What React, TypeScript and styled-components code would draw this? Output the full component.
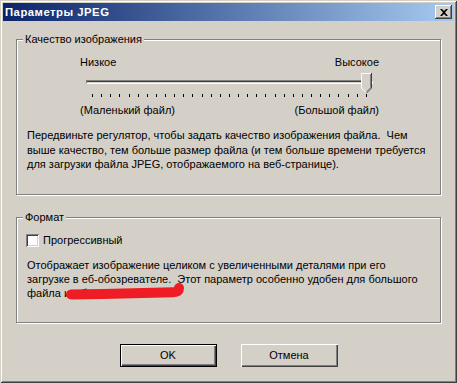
import React from 'react';
import styled, {createGlobalStyle} from 'styled-components';

const face = '#d4d0c8';
const shadow = '#808080';
const darkShadow = '#404040';
const uiFont = '"Liberation Sans", Arial, sans-serif';

const GlobalStyle = createGlobalStyle`
  html, body {
    margin: 0;
    padding: 0;
    background: ${face};
  }
  body {
    font-family: ${uiFont};
    font-size: 11px;
    color: #000;
  }
`;

const Window = styled.div`
  width: 457px;
  height: 383px;
  box-sizing: border-box;
  padding: 3px;
  background: ${face};
  box-shadow: inset 1px 1px 0 ${face}, inset -1px -1px 0 ${darkShadow},
    inset 2px 2px 0 #fff, inset -2px -2px 0 ${shadow};
  display: flex;
  flex-direction: column;
`;

const TitleBar = styled.div`
  height: 18px;
  display: flex;
  align-items: center;
  justify-content: space-between;
  padding: 0 2px 0 2px;
  background: linear-gradient(to right, #0a246a, #a6caf0);
`;

const Title = styled.div`
  color: #fff;
  font-weight: bold;
  font-size: 11.3px;
  letter-spacing: 0.5px;
`;

const CloseButton = styled.button`
  width: 17px;
  height: 14px;
  padding: 0;
  border: none;
  background: ${face};
  display: flex;
  align-items: center;
  justify-content: center;
  box-shadow: inset -1px -1px 0 ${darkShadow}, inset 1px 1px 0 #fff,
    inset -2px -2px 0 ${shadow};
`;

const Body = styled.div`
  padding: 12px 13px 0 13px;
  display: flex;
  flex-direction: column;
`;

const Group = styled.fieldset<{$top: number; $bottom: number}>`
  margin: ${(p) => p.$top}px 0 0 0;
  padding: 0 6px ${(p) => p.$bottom}px 6px;
  min-width: 0;
  width: 425px;
  box-sizing: border-box;
  border: 1px solid ${shadow};
  box-shadow: 1px 1px 0 #fff, inset 1px 1px 0 #fff;
`;

const Legend = styled.legend`
  padding: 0 2px;
  line-height: 13px;
  background: ${face};
`;

const SliderBox = styled.div`
  margin: 10px 0 0 57px;
  width: 299px;
`;

const LabelRow = styled.div`
  display: flex;
  justify-content: space-between;
  line-height: 13px;
  white-space: nowrap;
`;

const TrackArea = styled.div`
  position: relative;
  height: 24px;
`;

const Track = styled.div`
  position: absolute;
  left: 6px;
  right: 6px;
  top: 11px;
  height: 4px;
  box-sizing: border-box;
  border-top: 1px solid ${shadow};
  border-left: 1px solid ${shadow};
  border-bottom: 1px solid #fff;
  border-right: 1px solid #fff;
  box-shadow: inset 0 1px 0 ${darkShadow};
`;

const Thumb = styled.svg`
  position: absolute;
  left: 281px;
  top: 4px;
`;

const Ticks = styled.div`
  display: flex;
  justify-content: space-between;
  margin: 1px 12px 0 12px;
  height: 3px;
`;

const Tick = styled.span`
  width: 1px;
  height: 3px;
  background: #000;
`;

const BottomLabels = styled(LabelRow)`
  margin-top: 7px;
`;

const Text = styled.p<{$top: number; $line: number}>`
  position: relative;
  margin: ${(p) => p.$top}px 0 0 4px;
  line-height: ${(p) => p.$line}px;
  white-space: nowrap;
`;

const CheckRow = styled.label`
  display: flex;
  align-items: center;
  gap: 4px;
  margin: 10px 0 0 3px;
  line-height: 13px;
`;

const CheckBox = styled.span`
  width: 13px;
  height: 13px;
  box-sizing: border-box;
  background: #fff;
  box-shadow: inset 1px 1px 0 ${shadow}, inset -1px -1px 0 #fff,
    inset 2px 2px 0 ${darkShadow}, inset -2px -2px 0 ${face};
`;

const Scribble = styled.svg`
  position: absolute;
  left: 39px;
  top: 24px;
`;

const Buttons = styled.div`
  display: flex;
  justify-content: center;
  gap: 24px;
  margin-top: 21px;
`;

const Button = styled.button<{$default?: boolean}>`
  width: 97px;
  height: 23px;
  padding: 0;
  border: ${(p) => (p.$default ? '1px solid #000' : 'none')};
  background: ${face};
  font-family: ${uiFont};
  font-size: 11px;
  color: #000;
  box-shadow: inset 1px 1px 0 #fff, inset -1px -1px 0 ${darkShadow},
    inset -2px -2px 0 ${shadow};
`;

const ticks = Array.from({length: 31}, (_, i) => i);

export default function App() {
  return (
    <>
      <GlobalStyle />
      <Window>
        <TitleBar>
          <Title>Параметры JPEG</Title>
          <CloseButton aria-label="Закрыть">
            <svg width="8" height="7" viewBox="0 0 8 7">
              <path d="M0 0h2l2 2 2-2h2L5 3.5 8 7H6L4 5 2 7H0l3-3.5z" fill="#000" />
            </svg>
          </CloseButton>
        </TitleBar>
        <Body>
          <Group $top={0} $bottom={22}>
            <Legend>Качество изображения</Legend>
            <SliderBox>
              <LabelRow>
                <span>Низкое</span>
                <span>Высокое</span>
              </LabelRow>
              <TrackArea>
                <Track />
                <Thumb width="11" height="21" viewBox="0 0 11 21">
                  <path d="M0 0H11V15L5.5 20.5L0 15Z" fill={face} />
                  <path d="M0.5 15V0.5H10" stroke="#fff" fill="none" />
                  <path d="M10.5 0V15L5.5 20" stroke={darkShadow} fill="none" />
                  <path d="M9.5 1V14.8L5.5 18.8" stroke={shadow} fill="none" />
                  <path d="M0.5 15L5 19.5" stroke="#fff" fill="none" />
                </Thumb>
              </TrackArea>
              <Ticks>
                {ticks.map((t) => (
                  <Tick key={t} />
                ))}
              </Ticks>
              <BottomLabels>
                <span>(Маленький файл)</span>
                <span>(Большой файл)</span>
              </BottomLabels>
            </SliderBox>
            <Text $top={11} $line={14.5}>
              Передвиньте регулятор, чтобы задать качество изображения файла.&nbsp; Чем
              <br />
              выше качество, тем больше размер файла (и тем больше времени требуется
              <br />
              для загрузки файла JPEG, отображаемого на веб-странице).
            </Text>
          </Group>
          <Group $top={16} $bottom={22}>
            <Legend>Формат</Legend>
            <CheckRow>
              <CheckBox />
              <span>Прогрессивный</span>
            </CheckRow>
            <Text $top={11} $line={14}>
              Отображает изображение целиком с увеличенными деталями при его
              <br />
              загрузке в еб-обозревателе.&nbsp; Этот параметр особенно удобен для большого
              <br />
              файла изображения.
              <Scribble width="124" height="20" viewBox="0 0 124 20">
                <path
                  d="M5 12.5C40 12 82 11 107 10.3C111.5 10.1 113 8.5 113 6"
                  stroke="#ee1c24"
                  strokeWidth="10"
                  strokeLinecap="round"
                  fill="none"
                />
              </Scribble>
            </Text>
          </Group>
          <Buttons>
            <Button $default>OK</Button>
            <Button>Отмена</Button>
          </Buttons>
        </Body>
      </Window>
    </>
  );
}
